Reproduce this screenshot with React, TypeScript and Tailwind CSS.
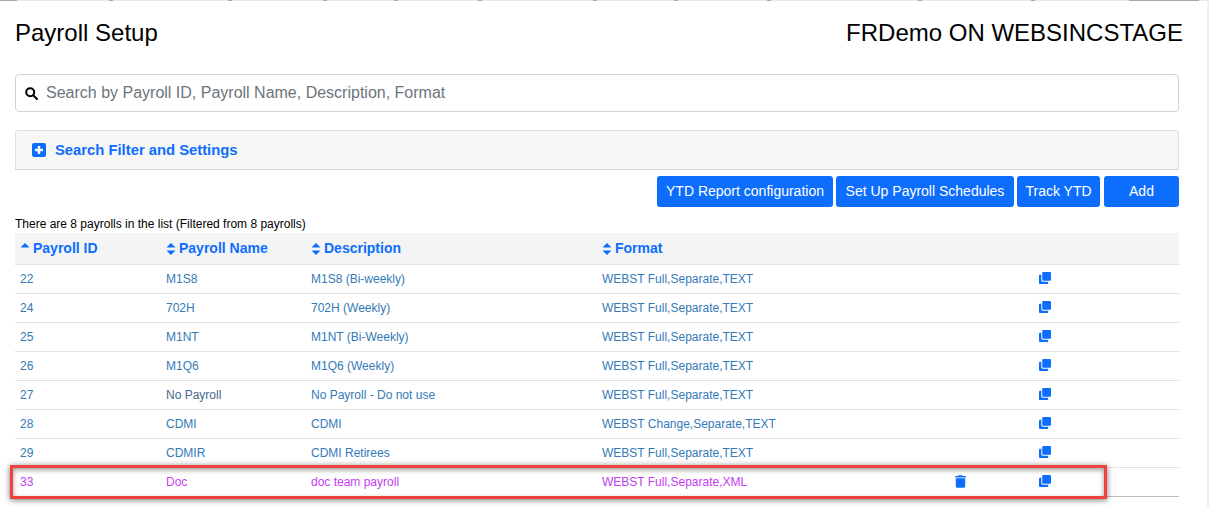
import React from "react";

function Copy() {
  return (
    <svg width="12" height="12" viewBox="0 0 13 13" fill="#0d6efd" className="-mt-[2px]">
      <rect x="3.5" y="0" width="9.5" height="9.5" rx="1.2" />
      <path d="M1.2 3H2.5v5.8c0 1 .7 1.7 1.7 1.7H10v1.3c0 .7-.5 1.2-1.2 1.2H1.2C.5 13 0 12.5 0 11.8V4.2C0 3.5.5 3 1.2 3z" />
    </svg>
  );
}

function Trash() {
  return (
    <svg width="11" height="13" viewBox="0 0 448 512" fill="#0d6efd" className="-mt-[2px]">
      <path d="M135 18C140 7 151 0 163 0h122c12 0 23 7 28 18l8 14h95c18 0 32 14 32 32s-14 32-32 32H32C14 96 0 82 0 64s14-32 32-32h95l8-14zM32 128h384v320c0 35-29 64-64 64H96c-35 0-64-29-64-64V128z" />
    </svg>
  );
}

function Sort({ up }: { up?: boolean }) {
  return (
    <svg width="10" height="14" viewBox="0 0 10 14" fill="#0d6efd" className="shrink-0">
      <path d="M5 1 9.5 5.6H.5z" />
      {!up && <path d="M5 13 .5 8.4h9z" />}
    </svg>
  );
}

const rows = [
  ["22", "M1S8", "M1S8 (Bi-weekly)", "WEBST Full,Separate,TEXT"],
  ["24", "702H", "702H (Weekly)", "WEBST Full,Separate,TEXT"],
  ["25", "M1NT", "M1NT (Bi-Weekly)", "WEBST Full,Separate,TEXT"],
  ["26", "M1Q6", "M1Q6 (Weekly)", "WEBST Full,Separate,TEXT"],
  ["27", "No Payroll", "No Payroll - Do not use", "WEBST Full,Separate,TEXT"],
  ["28", "CDMI", "CDMI", "WEBST Change,Separate,TEXT"],
  ["29", "CDMIR", "CDMI Retirees", "WEBST Full,Separate,TEXT"],
];

function Row({ r, purple, last }: { r: string[]; purple?: boolean; last?: boolean }) {
  const c = purple ? "text-[#c340f2]" : "text-[#337ab7]";
  const nameC = r[1] === "No Payroll" ? "text-[#46688c]" : c;
  return (
    <div className={`flex h-[29px] items-center border-b text-[12px] ${last ? "border-[#bdbdbd]" : "border-[#dee2e6]"}`}>
      <div className={`w-[146px] pl-[5px] ${c}`}>{r[0]}</div>
      <div className={`w-[145px] pl-[5px] ${nameC}`}>{r[1]}</div>
      <div className={`w-[291px] pl-[5px] ${c}`}>{r[2]}</div>
      <div className={`w-[353px] pl-[5px] ${c}`}>{r[3]}</div>
      <div className="flex w-[84px] pl-[5px]">{purple && <Trash />}</div>
      <div className="flex pl-[5px]"><Copy /></div>
    </div>
  );
}

const ticks = [109, 228, 323, 394, 478, 593, 674, 767, 918, 1031];

export default function App() {
  return (
    <div className="relative h-[507px] w-[1209px] overflow-hidden bg-white font-['Liberation_Sans',Arial,sans-serif] text-black">
      <div className="w-[1164px] pl-[15px] box-content">
        <div className="flex items-center justify-between pt-[18px]">
          <div className="text-[24px] leading-[30px]">Payroll Setup</div>
          <div className="mr-[-4px] text-[24px] leading-[30px]">FRDemo ON WEBSINCSTAGE</div>
        </div>
        <div className="mt-[26px] flex h-[38px] items-center rounded-[4px] border border-[#ced4da] pl-[9px] text-[16px] text-[#6c757d]">
          <svg width="13" height="13" viewBox="0 0 13 13" fill="none" stroke="#000" strokeWidth="2" className="mr-[8px]">
            <circle cx="5.2" cy="5.2" r="4" />
            <path d="M8.2 8.2 12 12" strokeLinecap="round" />
          </svg>
          Search by Payroll ID, Payroll Name, Description, Format
        </div>
        <div className="mt-[18px] flex h-[40px] items-center rounded-t-[4px] border border-[#dfdfdf] border-b-[#d4d4d4] bg-[#f7f7f7] pl-[16px] text-[14.8px] font-bold text-[#0d6efd]">
          <svg width="14" height="14" viewBox="0 0 14 14" className="mr-[9px]">
            <rect width="14" height="14" rx="2" fill="#0d6efd" />
            <path d="M5.8 3h2.4v2.8H11v2.4H8.2V11H5.8V8.2H3V5.8h2.8z" fill="#fff" />
          </svg>
          Search Filter and Settings
        </div>
        <div className="mt-[6px] flex justify-end gap-[3px] text-[14px] text-white">
          <div className="flex h-[31px] w-[176px] items-center justify-center rounded-[3px] bg-[#0d6efd]">YTD Report configuration</div>
          <div className="flex h-[31px] w-[178px] items-center justify-center rounded-[3px] bg-[#0d6efd]">Set Up Payroll Schedules</div>
          <div className="mr-[1px] flex h-[31px] w-[83px] items-center justify-center rounded-[3px] bg-[#0d6efd]">Track YTD</div>
          <div className="flex h-[31px] w-[75px] items-center justify-center rounded-[3px] bg-[#0d6efd]">Add</div>
        </div>
        <div className="mt-[9px] h-[17px] text-[12px] leading-[16px]">There are 8 payrolls in the list (Filtered from 8 payrolls)</div>
        <div className="flex h-[32px] items-center border-b border-[#dee2e6] bg-[#f4f4f5] text-[14px] font-bold text-[#0d6efd]">
          <div className="flex w-[146px] items-center gap-[3px] pl-[5px]"><Sort up />Payroll ID</div>
          <div className="flex w-[145px] items-center gap-[3px] pl-[5px]"><Sort />Payroll Name</div>
          <div className="flex w-[291px] items-center gap-[3px] pl-[5px]"><Sort />Description</div>
          <div className="flex items-center gap-[3px] pl-[5px]"><Sort />Format</div>
        </div>
        {rows.map((r) => <Row key={r[0]} r={r} />)}
        <Row r={["33", "Doc", "doc team payroll", "WEBST Full,Separate,XML"]} purple last />
      </div>
      <div className="absolute left-0 right-0 top-0 h-[1px] bg-[#e8e8e8]">
        <div className="absolute left-0 top-0 h-[1px] w-[17px] bg-[#a8a8a8]" />
        {ticks.map((x) => (
          <div key={x} className="absolute top-0 h-[1px] w-[4px] bg-[#a8a8a8]" style={{ left: x }} />
        ))}
        <div className="absolute left-[1129px] top-0 h-[1px] w-[70px] bg-[#a8a8a8]" />
      </div>
      <div className="absolute bottom-[8px] left-[10px] top-[465px] w-[1097px] border-[3px] border-[#f04040] shadow-[0_1px_6px_rgba(0,0,0,0.55),inset_0_2px_5px_rgba(0,0,0,0.4)]" />
      <div className="absolute bottom-0 right-0 top-0 w-[2px] bg-[#efefef]" />
    </div>
  );
}
